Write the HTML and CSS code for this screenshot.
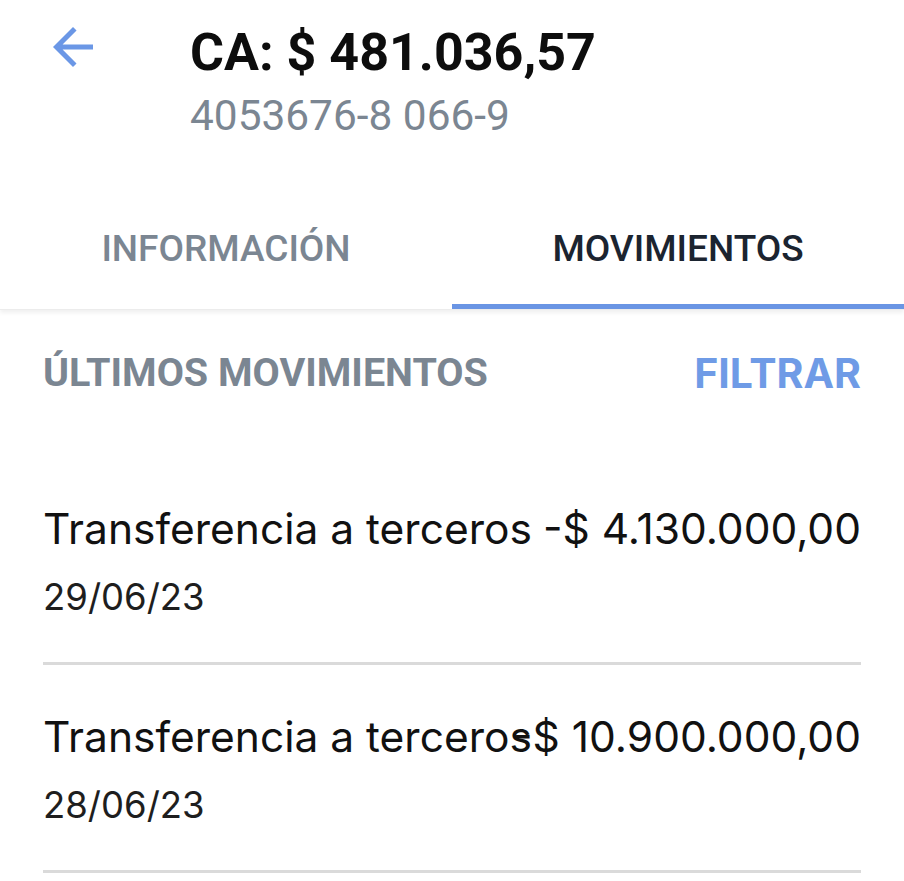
FILE: index.html
```html
<!DOCTYPE html>
<html lang="es">
<head>
<meta charset="utf-8">
<title>Movimientos</title>
<link rel="stylesheet" href="styles.css">
</head>
<body>
<div class="screen">
  <header class="header">
    <button class="back" aria-label="Volver">
      <svg viewBox="0 0 24 24" width="60" height="60"><path d="M20 11H7.83l5.59-5.59L12 4l-8 8 8 8 1.41-1.41L7.83 13H20v-2z" fill="currentColor"/></svg>
    </button>
    <div class="account">
      <div class="balance">CA: $ 481.036,57</div>
      <div class="number">4053676-8 066-9</div>
    </div>
  </header>
  <nav class="tabs">
    <div class="tab">INFORMACIÓN</div>
    <div class="tab active">MOVIMIENTOS</div>
  </nav>
  <section class="movements">
    <div class="section-head">
      <span class="section-title">ÚLTIMOS MOVIMIENTOS</span>
      <span class="filter">FILTRAR</span>
    </div>
    <ul class="list">
      <li class="item">
        <div class="line">
          <span class="desc">Transferencia a terceros</span>
          <span class="amount">-$ 4.130.000,00</span>
        </div>
        <div class="date">29/06/23</div>
      </li>
      <li class="item">
        <div class="line">
          <span class="desc">Transferencia a terceros</span>
          <span class="amount">-$ 10.900.000,00</span>
        </div>
        <div class="date">28/06/23</div>
      </li>
    </ul>
  </section>
</div>
</body>
</html>
```
FILE: styles.css
```css
* { box-sizing: border-box; }
html, body { margin: 0; padding: 0; background: #ffffff; }
body { font-family: "Inter", "Roboto", sans-serif; color: #111111; overflow: hidden; }
.screen { width: 904px; height: 881px; overflow: hidden; }

.header {
  display: flex;
  align-items: flex-start;
  padding: 17px 0 0 43px;
  height: 190px;
}
.back {
  width: 60px; height: 60px; padding: 0; border: 0; background: none;
  color: #6b97e6; display: flex;
}
.account { margin-left: 87px; padding-top: 6px; display: flex; flex-direction: column; gap: 8px; }
.balance {
  font-family: "Roboto", sans-serif; font-weight: 700; font-size: 52px; line-height: 60px;
  color: #0d0d0d;
}
.number {
  font-family: "Roboto", sans-serif; font-weight: 400; font-size: 42.4px; line-height: 50px;
  color: #7b8692;
}

.tabs {
  display: flex;
  box-shadow: 0 3px 4px rgba(0,0,0,0.06);
  border-bottom: 1px solid #ececec;
}
.tab {
  flex: 1;
  text-align: center;
  font-family: "Roboto", sans-serif; font-weight: 500; font-size: 37px; line-height: 44px;
  color: #7b8692;
  padding: 37px 0 33px;
  border-bottom: 5px solid transparent;
}
.tab.active { color: #1b2430; border-bottom-color: #6a95e4; }

.movements { padding: 0 43px; }
.section-head {
  display: flex; justify-content: space-between; align-items: center;
  padding-top: 38px;
  line-height: 50px;
}
.section-title {
  font-family: "Roboto", sans-serif; font-weight: 700; font-size: 39.5px;
  color: #7b8692;
}
.filter {
  font-family: "Inter", sans-serif; font-weight: 700; font-size: 41px;
  color: #6f9be6;
}

.list { list-style: none; margin: 59px 0 0; padding: 0; }
.item {
  padding: 48px 0 42px;
  border-bottom: 3px solid #dadada;
  display: flex; flex-direction: column; gap: 21px;
}
.line {
  display: grid;
  grid-template-areas: "cell";
  font-size: 42.5px; line-height: 48px; color: #111111;
}
.desc { grid-area: cell; justify-self: start; white-space: nowrap; }
.amount { grid-area: cell; justify-self: end; white-space: nowrap; }
.date { font-size: 36.5px; line-height: 46px; color: #1e1e1e; }
```
